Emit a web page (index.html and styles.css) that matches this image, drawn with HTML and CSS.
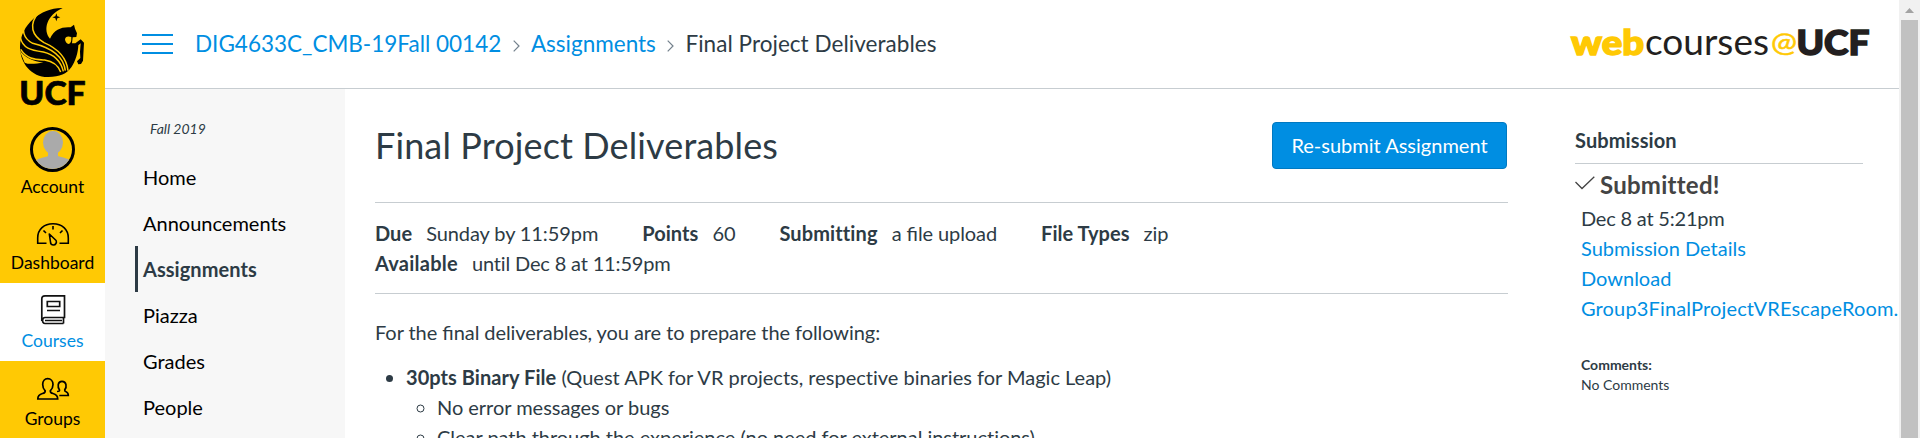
FILE: index.html
```html
<!DOCTYPE html>
<html lang="en">
<head>
<meta charset="utf-8">
<title>Final Project Deliverables</title>
<link rel="stylesheet" href="styles.css">
</head>
<body>
<div class="app">
  <nav class="global-nav">
    <a class="brand">
      <svg width="105" height="110" viewBox="0 0 315 330">
        <path d="M188 24C125 22 62 72 60 140C60 190 95 232 145 231C180 231 200 222 214 202C226 184 234 160 235 136L242 130L240 155L241 174L231 184L235 193L243 192L249 182L252 128L242 118L226 130L216 130L218 112L229 111L231 100L225 86L222 74L212 82C185 80 163 88 150 116C128 90 140 45 188 24Z"/>
        <path d="M214 111Q196 106 195 119Q199 132 207 132Q215 128 214 111Z" fill="#ffc904"/>
        <path d="M169 40L172 49L181 52L172 55L169 64L166 55L157 52L166 49Z"/>
        <g fill="none" stroke="#ffc904" stroke-width="4.500">
          <path d="M118 36C82 75 98 108 132 128C178 148 200 175 204 212"/>
          <path d="M80 60C62 88 70 116 98 130C148 142 190 165 196 212"/>
          <path d="M61 112C68 145 92 150 130 156C164 164 182 182 190 214"/>
          <path d="M62 148C82 178 104 178 134 180C160 184 174 194 182 216"/>
        </g>
        <path d="M58 150L74 188C88 195 110 190 130 188C100 184 78 176 58 150Z" fill="#ffc904"/>
        <text class="brand-text" x="58" y="314" textLength="199" lengthAdjust="spacingAndGlyphs">UCF</text>
      </svg>
    </a>
    <a class="nav-item account">
      <span class="avatar"><svg width="39" height="39" viewBox="0 0 39 39"><g fill="#aaa"><ellipse cx="20" cy="12.500" rx="10" ry="11.500"/><path d="M15 21h10v5c6 2 11 2 14 7v6H0v-6c4-5 10-5 15-7z"/></g></svg></span>
      <span>Account</span>
    </a>
    <a class="nav-item">
      <svg width="34" height="30" viewBox="0 0 34 30" fill="none" stroke="#000" stroke-width="1.600"><path d="M10.500 25.300H1.700V20C1.700 11.500 8 5.800 17 5.800s15.300 5.700 15.300 14.200v5.300h-8.800M17 8v3.500M7.500 12.500l2.500 2.500M26.500 12.500l-2.500 2.500"/><path stroke-linejoin="round" d="M13.300 16l6.800 6.500c1 2-.5 4.500-2.600 4.500s-3-1.500-3-3z"/></svg>
      <span>Dashboard</span>
    </a>
    <a class="nav-item active">
      <svg width="34" height="30" viewBox="0 0 34 30" fill="none" stroke="#111" stroke-width="1.700"><path d="M28.500 22.500H9c-3 0-3.500 6 0 6h18.500M5.800 26V4c0-2.200 1-3.200 3.200-3.200h19.500v21.700h-1v6M9 25.500h17"/><path d="M11.300 6.500h12.400v5H11.300zM11 15.500h13"/></svg>
      <span>Courses</span>
    </a>
    <a class="nav-item">
      <svg width="34" height="30" viewBox="0 0 34 30" fill="none" stroke="#000" stroke-width="1.700"><path d="M1.800 25c0-3.500 2-4.800 4.700-5.500 2-.5 2.700-1 2.700-2.600-2-2-2.500-4-2.500-6.500 0-3.400 2-5.800 5-5.800s5.300 2.400 5.300 5.800c0 2.500-.7 4.500-2.700 6.500 0 1.600.7 2.100 2.700 2.600 2.700.7 4.700 2 4.700 5.500z"/><path d="M21 17.500c2 0 2.700-.4 2.500-1.600-2-2.600-2.200-8.500 2.500-8.500s5 5.900 2.700 8.500c-.2 1.300.3 1.500 1.300 1.800 1.600.6 2.300 1.200 2.300 3.800h-9"/></svg>
      <span>Groups</span>
    </a>
  </nav>
  <div class="page">
    <header class="topbar">
      <svg class="menu" width="31" height="20" viewBox="0 0 31 20" stroke="#008ee2" stroke-width="2"><path d="M0 1h31M0 10h31M0 19h31"/></svg>
      <div class="crumbs">
        <a>DIG4633C_CMB-19Fall 00142</a>
        <svg class="sep" width="7" height="12" viewBox="0 0 7 12"><path d="M.7 .7L6 6L.7 11.300"/></svg>
        <a>Assignments</a>
        <svg class="sep" width="7" height="12" viewBox="0 0 7 12"><path d="M.7 .7L6 6L.7 11.300"/></svg>
        <span>Final Project Deliverables</span>
      </div>
      <svg class="wordmark" width="304" height="70" viewBox="0 -15 304 70">
        <text class="w-heavy gold" x="1" y="30.500" textLength="73" lengthAdjust="spacingAndGlyphs">web</text>
        <text class="w-light" x="75" y="30.500" textLength="124" lengthAdjust="spacingAndGlyphs">courses</text>
        <text class="w-at gold" x="201" y="28" textLength="26" lengthAdjust="spacingAndGlyphs">@</text>
        <text class="w-heavy" x="226.500" y="30.500" textLength="73" lengthAdjust="spacingAndGlyphs">UCF</text>
      </svg>
    </header>
    <div class="body">
      <aside class="course-nav">
        <div class="term">Fall 2019</div>
        <a>Home</a>
        <a>Announcements</a>
        <a class="current">Assignments</a>
        <a>Piazza</a>
        <a>Grades</a>
        <a>People</a>
      </aside>
      <main class="content">
        <div class="title-row">
          <h1>Final Project Deliverables</h1>
          <button class="btn">Re-submit Assignment</button>
        </div>
        <ul class="facts">
          <li><b>Due</b><span>Sunday by 11:59pm</span></li>
          <li><b>Points</b><span>60</span></li>
          <li><b class="wide">Submitting</b><span>a <span class="lig">fi</span>le upload</span></li>
          <li><b>File Types</b><span>zip</span></li>
          <li class="full"><b>Available</b><span>until Dec 8 at 11:59pm</span></li>
        </ul>
        <p class="intro">For the <span class="lig">fi</span>nal deliverables, you are to prepare the following:</p>
        <ul class="list">
          <li><b>30pts Binary File</b> (Quest APK for VR projects, respective binaries for Magic Leap)
            <ul>
              <li>No error messages or bugs</li>
              <li>Clear path through the experience (no need for external instructions)</li>
            </ul>
          </li>
        </ul>
      </main>
      <aside class="submission">
        <h2>Submission</h2>
        <div class="status"><svg width="20" height="14" viewBox="0 0 20 14"><path d="M.5 6L7 12.500L19.300 .7"/></svg><span>Submitted!</span></div>
        <div class="details">
          <div class="date">Dec 8 at 5:21pm</div>
          <a>Submission Details</a>
          <a>Download</a>
          <a class="file">Group3FinalProjectVREscapeRoom.</a>
        </div>
        <div class="comments"><b>Comments:</b><div>No Comments</div></div>
      </aside>
    </div>
  </div>
  <div class="scrollbar">
    <svg width="21" height="20" viewBox="0 0 21 20"><path d="M6 13L10.500 8L15 13z" fill="#a3a3a3"/></svg>
    <div class="thumb"></div>
  </div>
</div>
</body>
</html>
```
FILE: styles.css
```css
* { box-sizing: border-box; }
html, body { margin: 0; height: 438px; overflow: hidden; }
body { font: 20px/30px Lato, sans-serif; color: #2d3b45; background: #fff; font-variant-ligatures: none; }
svg { display: block; flex: none; overflow: visible; }
a { color: #008ee2; display: block; }
h1, h2, p, ul { margin: 0; padding: 0; }
.lig { font-variant-ligatures: normal; letter-spacing: 0; }
.app { display: flex; height: 438px; overflow: hidden; }

.global-nav { width: 105px; flex: none; background: #ffc904; }
.brand { height: 110px; }
.brand-text { font: 900 95px Lato, sans-serif; fill: #000; stroke: #000; stroke-width: 2; }
.nav-item { height: 78px; padding-top: 13px; display: flex; flex-direction: column; align-items: center; font-size: 17.5px; line-height: 20px; color: #000; gap: 5px; }
.nav-item.account { height: 95px; padding-top: 17px; }
.nav-item.active { background: #fff; color: #008ee2; padding-top: 12px; gap: 6px; }
.avatar { width: 45px; height: 45px; border: 3px solid #000; border-radius: 50%; overflow: hidden; }

.page { width: 1794px; flex: none; overflow: hidden; }
.topbar { height: 89px; border-bottom: 1px solid #c7cdd1; display: flex; align-items: center; padding: 0 25px 0 37px; }
.crumbs { display: flex; align-items: center; margin-left: 22px; font-size: 22.5px; }
.crumbs span { letter-spacing: .04px; }
.sep { margin: 4px 11.3px 0; fill: none; stroke: #73818c; stroke-width: 1.2; }
.wordmark { margin-left: auto; }
.w-heavy { font: 900 34px Lato, sans-serif; fill: #231f20; stroke: #231f20; stroke-width: 1.5; }
.w-light { font: 400 36px Lato, sans-serif; fill: #231f20; }
.w-at { font: 400 26px Lato, sans-serif; stroke: #ffc904; stroke-width: .5; }
.gold { fill: #ffc904; stroke: #ffc904; }

.body { display: flex; height: 349px; }
.course-nav { width: 240px; flex: none; background: #f7f7f7; padding: 25px 0 0 30px; }
.term { font-size: 14px; font-style: italic; padding-left: 15px; height: 40px; }
.course-nav a { height: 46px; line-height: 46px; padding-left: 5px; border-left: 3px solid transparent; color: #000; }
.course-nav .current { color: #2d3b45; font-weight: 700; border-color: #2d3b45; letter-spacing: .05px; }

.content { width: 1133px; margin-left: 30px; flex: none; }
.title-row { display: flex; justify-content: space-between; height: 113px; padding: 33px 1px 0 0; }
h1 { font-size: 36px; font-weight: 400; line-height: 47px; letter-spacing: .12px; }
.btn { height: 47px; width: 235px; padding: 0 0 2px; border: 1px solid #0079c1; border-radius: 4px; background: #008ee2; color: #fff; font: 20px Lato, sans-serif; }
.facts { list-style: none; display: flex; flex-wrap: wrap; height: 92px; border: solid #c7cdd1; border-width: 1px 0; padding: 15px 0; column-gap: 44px; letter-spacing: -.1px; }
.facts li { display: flex; gap: 14px; }
.facts b { letter-spacing: .05px; }
.facts .wide { letter-spacing: .12px; }
.facts .full { width: 100%; }
.facts .full b { letter-spacing: .25px; }
.facts .full span { letter-spacing: -.16px; }
.intro { margin: 23px 0 15px; letter-spacing: -.07px; }
.list { padding-left: 31px; }
.list b { letter-spacing: .05px; }
.list ul { padding-left: 31px; letter-spacing: -.03px; }

.submission { margin-left: 67px; width: 288px; flex: none; padding-top: 36px; white-space: nowrap; }
h2 { font-size: 20px; line-height: 30px; height: 39px; border-bottom: 1px solid #c7cdd1; letter-spacing: .1px; }
.status { display: flex; gap: 5px; font-size: 24px; font-weight: 700; color: #444; margin-top: 6px; line-height: 30px; letter-spacing: .25px; }
.status svg { fill: none; stroke: #444; stroke-width: 1.3; margin-top: 6px; }
.details { padding: 3px 0 0 6px; }
.date { letter-spacing: -.2px; }
.file { letter-spacing: .15px; }
.comments { padding: 32px 0 0 6px; font-size: 14px; line-height: 20px; }

.scrollbar { width: 21px; flex: none; background: #f1f1f1; }
.thumb { width: 17px; height: 418px; margin-left: 2px; background: #c1c1c1; }
```
